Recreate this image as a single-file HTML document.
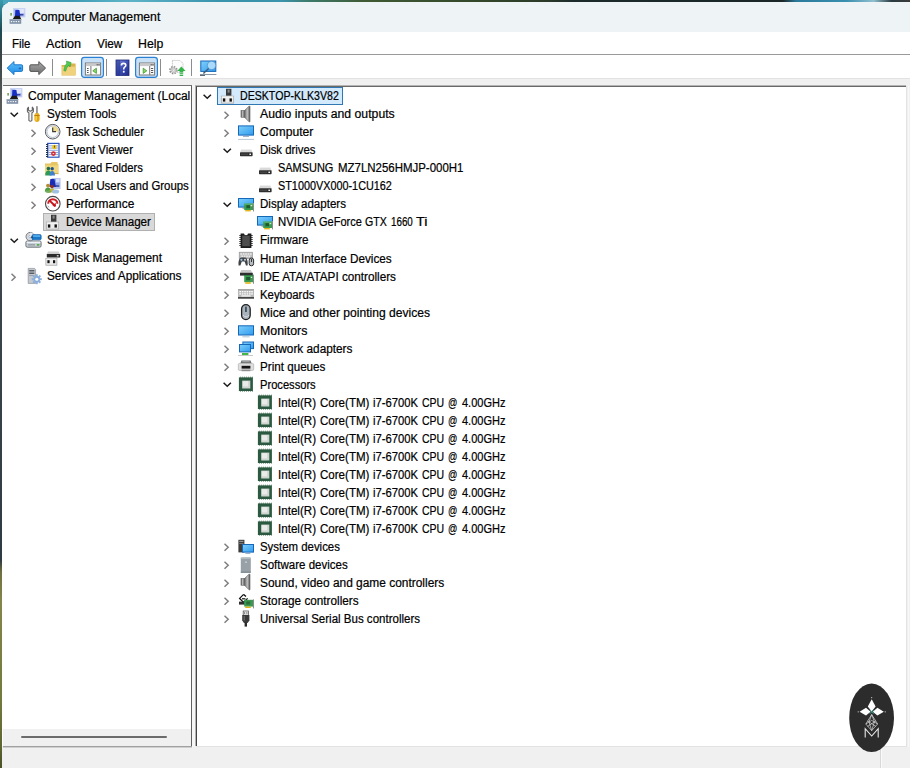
<!DOCTYPE html>
<html><head><meta charset="utf-8"><title>Computer Management</title>
<style>
html,body{margin:0;padding:0;overflow:hidden}
body{width:910px;height:768px;overflow:hidden;position:relative;background:#3795aa;font-family:"Liberation Sans",sans-serif;font-size:12px;color:#000}
.abs{position:absolute}
.t{position:absolute;white-space:nowrap;line-height:18px;height:18px;font-size:12.5px;-webkit-text-stroke:.22px #000;transform-origin:0 50%;display:block}
.i{position:absolute;overflow:visible}
#wall-top{left:0;top:0;width:910px;height:4px;background:linear-gradient(90deg,#4aa6bc 0,#3d9cb4 8%,#5fb4c8 14%,#3893ac 24%,#3a94ab 31%,#3c7a6a 34%,#3f5a34 40%,#34482a 52%,#2b3a28 60%,#1c2a2c 63%,#1a2628 86%,#2a7a9c 87.5%,#3a8fb0 93%,#8fc0d0 96%,#2a3a40 98%,#3a3a3a 100%)}
#wall-left{left:0;top:0;width:3px;height:768px;background:linear-gradient(180deg,#3a9cb0 0,#2d7a8a 12px,#1d4a54 30px,#3a4446 55px,#555958 100px,#5a5e5c 200px,#3a444b 300px,#2f3b43 560px,#6f7040 572px,#84854a 600px,#747a3e 700px,#5e6630 745px,#4a5226 768px)}
#win{left:2px;top:3px;width:908px;height:765px;background:#fff;border-radius:8px 0 0 0;overflow:hidden}
#title{left:0;top:0;width:908px;height:29px;background:#eef3f6}
#menubar{left:0;top:29px;width:908px;height:22px;background:#fff}
#menuline{left:0;top:51px;width:908px;height:1px;background:#9a9a9a}
#toolbar{left:0;top:52px;width:908px;height:23px;background:#fff}
#band{left:0;top:75px;width:908px;height:11px;background:#f0f0f0;border-top:1px solid #e2e2e2;box-sizing:border-box}
#status{left:0;top:743px;width:908px;height:22px;background:#f0f0f0}
</style></head><body>
<svg width="0" height="0" style="position:absolute"><defs>
<linearGradient id="gmon" x1="0" y1="0" x2="1" y2="1"><stop offset="0" stop-color="#7fd0fb"/><stop offset="1" stop-color="#2f9bee"/></linearGradient>
<linearGradient id="gspk" x1="0" y1="0" x2="1" y2="0"><stop offset="0" stop-color="#606060"/><stop offset=".5" stop-color="#c4c4c4"/><stop offset="1" stop-color="#5a5a5a"/></linearGradient>
</defs></svg>
<div class="abs" id="wall-top"></div><div class="abs" id="wall-left"></div>
<div class="abs" id="win">
<div class="abs" id="title"></div><div class="abs" id="menubar"></div><div class="abs" id="menuline"></div><div class="abs" id="toolbar"></div><div class="abs" id="band"></div><div class="abs" id="status"></div>
</div>

<div class="abs" style="left:3px;top:86px;width:188px;height:660px;background:#fff"></div>
<div class="abs" style="left:191px;top:85px;width:1px;height:661px;background:#606060"></div>
<div class="abs" style="left:3px;top:85px;width:189px;height:1px;background:#707070"></div>
<div class="abs" style="left:3px;top:746px;width:189px;height:1px;background:#a0a0a0"></div><div class="abs" style="left:3px;top:747px;width:189px;height:1px;background:#cfcfcf"></div>
<div class="abs" style="left:192px;top:85px;width:3px;height:662px;background:#f6f6f6"></div>
<div class="abs" style="left:195px;top:85px;width:711px;height:661px;background:#b4b4b4"></div>
<div class="abs" style="left:196px;top:86px;width:710px;height:660px;background:#fff;border-left:1px solid #444;border-top:1px solid #686868;box-sizing:border-box"></div>
<div class="abs" style="left:906px;top:86px;width:1px;height:660px;background:#e3e3e3"></div>
<div class="abs" style="left:907px;top:79px;width:3px;height:689px;background:#f0f0f0"></div>
<div class="abs" style="left:196px;top:746px;width:711px;height:1px;background:#e3e3e3"></div>
<div class="abs" style="left:3px;top:729px;width:188px;height:17px;background:#f0f0f0"></div>
<div class="abs" style="left:21px;top:736px;width:146px;height:2px;background:#6b6b6b;border-radius:1px"></div>
<div class="abs" style="left:880px;top:749px;width:1px;height:19px;background:#d8d8d8"></div><div class="abs" style="left:881px;top:749px;width:1px;height:19px;background:#fafafa"></div>
<div class="abs" style="left:908px;top:86px;width:1px;height:661px;background:#f8f8f8"></div>
<div class="abs" style="left:8px;top:2.3px;width:902px;height:1px;background:#eef3f6"></div>
<svg class="i" style="left:9px;top:7.4px" width="16" height="16" viewBox="0 0 16 16"><rect x="4" y="1" width="12.4" height="9.4" fill="#c9d3f4"/><rect x="5" y="2" width="10.4" height="7.4" fill="#aebcf0"/><rect x="9.4" y="2" width="6" height="4" fill="#dfe5fa"/>
<path d="M6.4 3 L10.4 3 L11.4 9.4 L6 9.4 Z" fill="#1630c4"/><rect x="11" y="7.2" width="3.4" height="1.2" fill="#1d2a8a"/>
<path d="M3.4 12.4 L6 8.8 L10.6 8.8 L12.4 12.4 Z" fill="#1a1a1a"/><rect x="1.4" y="6" width="1.4" height="2.6" fill="#5d9a3a"/>
<rect x=".6" y="12.2" width="11.6" height="4.6" fill="#7e8fa6"/><rect x=".6" y="12.2" width="11.6" height="1" fill="#9fb0c4"/>
<g fill="#eef2f7"><rect x="1.8" y="14" width="1.4" height="1.2"/><rect x="4.2" y="14" width="1.4" height="1.2"/><rect x="6.6" y="14" width="1.4" height="1.2"/><rect x="9" y="14" width="1.4" height="1.2"/></g></svg>
<span class="t" style="left:32px;top:8px;transform:scaleX(0.9769)">Computer Management</span>
<span class="t" style="left:12px;top:35px;transform:scaleX(0.9178)">File</span>
<span class="t" style="left:46px;top:35px;transform:scaleX(1.0072)">Action</span>
<span class="t" style="left:97px;top:35px;transform:scaleX(0.9414)">View</span>
<span class="t" style="left:138px;top:35px;transform:scaleX(0.9837)">Help</span>
<svg class="i" style="left:0;top:56px" width="230" height="24" viewBox="0 56 230 24">
<defs>
<linearGradient id="gback" x1="0" y1="0" x2="0" y2="1"><stop offset="0" stop-color="#5cc0fa"/><stop offset="1" stop-color="#1e8ae6"/></linearGradient>
<linearGradient id="gfwd" x1="0" y1="0" x2="0" y2="1"><stop offset="0" stop-color="#a8a8a8"/><stop offset="1" stop-color="#6e6e6e"/></linearGradient>
<linearGradient id="ghelp" x1="0" y1="0" x2="1" y2="1"><stop offset="0" stop-color="#8492dc"/><stop offset=".5" stop-color="#3d4fb4"/><stop offset="1" stop-color="#1d2a86"/></linearGradient>
<linearGradient id="gmon2" x1="0" y1="0" x2="1" y2="1"><stop offset="0" stop-color="#7fd0fb"/><stop offset="1" stop-color="#2f9bee"/></linearGradient>
</defs>
<!-- back arrow -->
<path d="M7.2 68.1 L14 61.6 L14 64.8 L21.4 64.8 Q22.6 64.8 22.6 66 L22.6 70.2 Q22.6 71.4 21.4 71.4 L14 71.4 L14 74.6 Z" fill="url(#gback)" stroke="#1c78cc" stroke-width="1" stroke-linejoin="round"/><rect x="18.6" y="67.6" width="2.6" height="1.6" rx=".8" fill="#1a4fa0" opacity=".7"/>
<!-- forward arrow -->
<path d="M45.6 68.1 L38.8 61.6 L38.8 64.8 L31 64.8 Q29.8 64.8 29.8 66 L29.8 70.2 Q29.8 71.4 31 71.4 L38.8 71.4 L38.8 74.6 Z" fill="url(#gfwd)" stroke="#555" stroke-width="1" stroke-linejoin="round"/>
<!-- separators -->
<rect x="52" y="59" width="1" height="17" fill="#8c8c8c"/>
<rect x="106" y="59" width="1" height="17" fill="#8c8c8c"/>
<rect x="160" y="59" width="1" height="17" fill="#8c8c8c"/>
<rect x="191" y="59" width="1" height="17" fill="#8c8c8c"/>
<!-- folder up -->
<path d="M61.6 65 L67 65 L68 63.6 L75.6 63.6 L75.6 75.4 L61.6 75.4 Z" fill="#d9b24c"/>
<rect x="62.2" y="66.6" width="13.4" height="8.4" fill="#f1d27c"/>
<path d="M71.2 62.6 L66.4 61 L66.8 63.2 Q64.2 65.6 63.8 70.6 L65.6 71.2 Q66.6 67.2 68.8 65.2 L70 67 Z" fill="#4dcb4f" stroke="#2f8f38" stroke-width=".5"/>
<!-- highlighted button 1 -->
<rect x="81.6" y="57.4" width="21.8" height="19.9" rx="2.8" fill="#c9e1f7" stroke="#2a80d2" stroke-width="1.2"/>
<rect x="85.4" y="63" width="15.2" height="12" fill="#fdfdfd" stroke="#787878" stroke-width="1"/>
<rect x="85.9" y="63.5" width="14.2" height="2.6" fill="#c9c9c9"/><rect x="96.6" y="64" width="1.2" height="1.4" fill="#666"/><rect x="98.4" y="64" width="1.2" height="1.4" fill="#666"/>
<rect x="90.4" y="66" width="1" height="9" fill="#787878"/>
<rect x="87" y="68" width="1.6" height="1" fill="#555"/><rect x="87" y="70" width="1.6" height="1" fill="#555"/><rect x="87" y="72" width="1.6" height="1" fill="#555"/>
<path d="M96.4 68.2 L92.8 70.8 L96.4 73.4 Z" fill="#8fd66a" stroke="#3d9a2e" stroke-width=".8"/>
<!-- help -->
<rect x="116" y="60" width="13" height="15.4" fill="url(#ghelp)"/><rect x="116" y="60" width="13" height="15.4" fill="none" stroke="#1a2578" stroke-width=".8"/>
<rect x="116" y="60" width="4.2" height="15.4" fill="#1f2f8c" opacity=".55"/><path d="M121.4 65.4 Q121.4 63.4 123.6 63.4 Q125.8 63.4 125.8 65.2 Q125.8 66.4 124.6 67.2 Q123.7 67.9 123.7 69.4" fill="none" stroke="#fff" stroke-width="1.6"/><rect x="122.9" y="70.8" width="1.7" height="1.8" fill="#fff"/>
<!-- highlighted button 2 -->
<rect x="135.6" y="57.4" width="21.8" height="19.9" rx="2.8" fill="#c9e1f7" stroke="#2a80d2" stroke-width="1.2"/>
<rect x="139.4" y="63" width="15.2" height="12" fill="#fdfdfd" stroke="#787878" stroke-width="1"/>
<rect x="139.9" y="63.5" width="14.2" height="2.6" fill="#c9c9c9"/><rect x="150.6" y="64" width="1.2" height="1.4" fill="#666"/><rect x="152.4" y="64" width="1.2" height="1.4" fill="#666"/>
<rect x="149.2" y="66" width="1" height="9" fill="#787878"/>
<rect x="151" y="68" width="2.2" height="1" fill="#555"/><rect x="151" y="70" width="2.2" height="1" fill="#555"/><rect x="151" y="72" width="2.2" height="1" fill="#555"/>
<path d="M143.2 68.2 L146.8 70.8 L143.2 73.4 Z" fill="#8fd66a" stroke="#3d9a2e" stroke-width=".8"/>
<!-- properties/export: doc + gear + green arrow -->
<path d="M172.4 60.4 L180 60.4 L183 63.4 L183 72.4 L172.4 72.4 Z" fill="#fcfcfc" stroke="#b0b0b0" stroke-width=".8" stroke-dasharray="1.2 .8"/>
<g transform="translate(173.4 70.2)"><circle r="3.5" fill="#f2f2f2" stroke="#8e8e8e" stroke-width="1.5" stroke-dasharray="1.5 1.25"/><circle r="2.4" fill="#e9e9e9" stroke="#a0a0a0" stroke-width=".7"/><circle r="1" fill="#fff" stroke="#9a9a9a" stroke-width=".5"/></g>
<path d="M181.4 66.4 L185.6 71 L183.2 71 L183.2 72.4 L179.6 72.4 L179.6 71 L177.2 71 Z" fill="#36b44a"/><rect x="179.6" y="73.2" width="3.6" height="1.2" fill="#36b44a"/><rect x="179.6" y="75" width="3.6" height="1" fill="#36b44a"/>
<!-- monitor with magnifier -->
<rect x="200.8" y="61" width="15" height="10.4" fill="url(#gmon2)" stroke="#1667b7" stroke-width="1"/>
<circle cx="211.6" cy="65.4" r="4.2" fill="#a9dafa" stroke="#4f8cc6" stroke-width=".7"/>
<path d="M208.6 68.6 L203.4 73.6" stroke="#3c5a78" stroke-width="1.4"/>
<rect x="200" y="74" width="16.4" height="1" fill="#8796a6"/><rect x="200" y="75" width="5" height="1" fill="#5a6a7a"/>
</svg>

<div class="abs" style="left:43px;top:213px;width:112px;height:17.5px;background:#d9d9d9;border:1px solid #b0b0b0;box-sizing:border-box"></div>
<svg class="i" style="left:6px;top:87px" width="16" height="16" viewBox="0 0 16 16"><rect x="4" y="1" width="12.4" height="9.4" fill="#c9d3f4"/><rect x="5" y="2" width="10.4" height="7.4" fill="#aebcf0"/><rect x="9.4" y="2" width="6" height="4" fill="#dfe5fa"/>
<path d="M6.4 3 L10.4 3 L11.4 9.4 L6 9.4 Z" fill="#1630c4"/><rect x="11" y="7.2" width="3.4" height="1.2" fill="#1d2a8a"/>
<path d="M3.4 12.4 L6 8.8 L10.6 8.8 L12.4 12.4 Z" fill="#1a1a1a"/><rect x="1.4" y="6" width="1.4" height="2.6" fill="#5d9a3a"/>
<rect x=".6" y="12.2" width="11.6" height="4.6" fill="#7e8fa6"/><rect x=".6" y="12.2" width="11.6" height="1" fill="#9fb0c4"/>
<g fill="#eef2f7"><rect x="1.8" y="14" width="1.4" height="1.2"/><rect x="4.2" y="14" width="1.4" height="1.2"/><rect x="6.6" y="14" width="1.4" height="1.2"/><rect x="9" y="14" width="1.4" height="1.2"/></g></svg>
<span class="t" style="left:28px;top:87px;transform:scaleX(0.9612)">Computer Management (Local</span>
<svg class="i" style="left:9.5px;top:111px" width="9" height="7" viewBox="0 0 9 7"><path d="M.6 1.7 L4.25 5.3 L7.9 1.7" fill="none" stroke="#1b1b1b" stroke-width="1.5"/></svg>
<svg class="i" style="left:25px;top:105px" width="16" height="16" viewBox="0 0 16 16"><path d="M3.5 2.2 L2.4 3.6 L2.4 6.6 L3.9 8 L3.9 15.4 Q5.4 17 6.9 15.4 L6.9 8 L8.4 6.6 L8.4 3.6 L7.3 2.2 L7.3 5.2 L5.4 6.2 L3.5 5.2 Z" fill="#f4f4f4" stroke="#666" stroke-width="1.1" stroke-linejoin="round"/>
<rect x="11.2" y="1.2" width="1.5" height="7.4" fill="#7d7d7d"/><rect x="9.4" y="8" width="5.2" height="9" rx="2.4" fill="#e6a80f"/><rect x="10.5" y="9.2" width="1.3" height="6.4" rx=".6" fill="#f9d661"/><rect x="9.4" y="10" width="5.2" height="1" fill="#b97d08"/></svg>
<span class="t" style="left:46.6px;top:105px;transform:scaleX(0.9365)">System Tools</span>
<svg class="i" style="left:30px;top:128px" width="7" height="10" viewBox="0 0 7 10"><path d="M1.5 1.7 L5.2 5.2 L1.5 8.7" fill="none" stroke="#7d7d7d" stroke-width="1.45"/></svg>
<svg class="i" style="left:44px;top:123px" width="16" height="16" viewBox="0 0 16 16"><circle cx="8.7" cy="8.7" r="7.3" fill="#e9eef5" stroke="#5a5a5a" stroke-width="1"/><circle cx="8.7" cy="8.7" r="5.8" fill="#fbfcfe" stroke="#b9c0ca" stroke-width="1"/>
<path d="M8.7 8.7 L8.7 2.9 A5.8 5.8 0 0 1 14.5 8.7 Z" fill="#f1dc8c"/><path d="M8.7 4.4 L8.7 8.7 L12 8.7" fill="none" stroke="#3c3c3c" stroke-width="1.2"/></svg>
<span class="t" style="left:66px;top:123px;transform:scaleX(0.9126)">Task Scheduler</span>
<svg class="i" style="left:30px;top:146px" width="7" height="10" viewBox="0 0 7 10"><path d="M1.5 1.7 L5.2 5.2 L1.5 8.7" fill="none" stroke="#7d7d7d" stroke-width="1.45"/></svg>
<svg class="i" style="left:44px;top:141px" width="16" height="16" viewBox="0 0 16 16"><rect x="3" y="1.8" width="12.6" height="15" fill="#2f57bd"/><rect x="4.4" y="3" width="10" height="12.6" fill="#fff"/>
<g fill="#7f98d8"><rect x="4.4" y="4.4" width="10" height=".9"/><rect x="4.4" y="6.6" width="10" height=".9"/><rect x="4.4" y="8.8" width="10" height=".9"/><rect x="4.4" y="11" width="10" height=".9"/><rect x="4.4" y="13.2" width="10" height=".9"/></g>
<g fill="#22304f"><rect x="2" y="3" width="2" height="1"/><rect x="2" y="5" width="2" height="1"/><rect x="2" y="7" width="2" height="1"/><rect x="2" y="9" width="2" height="1"/><rect x="2" y="11" width="2" height="1"/><rect x="2" y="13" width="2" height="1"/><rect x="2" y="15" width="2" height="1"/></g>
<circle cx="10.4" cy="6" r="2.3" fill="#e9c31c"/><rect x="10" y="4.6" width=".9" height="2" fill="#5c4a00"/><circle cx="9.4" cy="12.6" r="2.3" fill="#d9272e"/><rect x="8.6" y="12.2" width="1.6" height=".9" fill="#fff"/></svg>
<span class="t" style="left:66px;top:141px;transform:scaleX(0.9125)">Event Viewer</span>
<svg class="i" style="left:30px;top:164px" width="7" height="10" viewBox="0 0 7 10"><path d="M1.5 1.7 L5.2 5.2 L1.5 8.7" fill="none" stroke="#7d7d7d" stroke-width="1.45"/></svg>
<svg class="i" style="left:44px;top:159px" width="16" height="16" viewBox="0 0 16 16"><path d="M1 4.4 L6.4 4.4 L7.6 3 L13.6 3 L13.6 5 L14.4 5 L14.4 15 L1 15 Z" fill="#e6c662"/><path d="M1 6.4 L14.4 6.4 L14.4 15 L1 15 Z" fill="#f0d77f"/><rect x="1" y="14.2" width="13.4" height=".9" fill="#c9a53c"/>
<circle cx="4.4" cy="9.6" r="1.8" fill="#1f6e4f"/><path d="M1.2 16.6 Q1.4 11.6 4.4 11.6 Q7.4 11.6 7.6 16.6 Z" fill="#2f9a56"/>
<circle cx="8.2" cy="9.8" r="1.7" fill="#1f4f8e"/><path d="M5.6 16.6 Q5.8 12 8.2 12 Q10.8 12 11 16.6 Z" fill="#3f7fd0"/></svg>
<span class="t" style="left:66px;top:159px;transform:scaleX(0.8986)">Shared Folders</span>
<svg class="i" style="left:30px;top:182px" width="7" height="10" viewBox="0 0 7 10"><path d="M1.5 1.7 L5.2 5.2 L1.5 8.7" fill="none" stroke="#7d7d7d" stroke-width="1.45"/></svg>
<svg class="i" style="left:44px;top:177px" width="16" height="16" viewBox="0 0 16 16"><rect x="7.6" y="1" width="9" height="11" fill="#b9c7ee"/><rect x="8.6" y="2" width="7" height="8" fill="#8fa6e6"/><rect x="12" y="2" width="3.6" height="3.4" fill="#d5defa"/>
<path d="M6.4 2 L10.4 2 L12 10 L5.4 10 Z" fill="#1a2cb4"/><rect x="11.6" y="8.4" width="3.6" height="1.2" fill="#1d2a8a"/>
<circle cx="4" cy="8.6" r="1.9" fill="#b98a2e"/><path d="M.8 14.6 Q1 10.6 4 10.6 Q7 10.6 7.2 14.6 Z" fill="#4f9a3e"/>
<circle cx="8" cy="9.6" r="1.8" fill="#8c2f24"/><path d="M5 15.4 Q5.2 11.6 8 11.6 Q10.8 11.6 11 15.4 Z" fill="#c7b43a"/>
<ellipse cx="11.6" cy="14.6" rx="3.6" ry="2" fill="#9fc2e2"/><ellipse cx="4.2" cy="14.6" rx="3" ry="1.4" fill="#6fae5c"/></svg>
<span class="t" style="left:66px;top:177px;transform:scaleX(0.9110)">Local Users and Groups</span>
<svg class="i" style="left:30px;top:200px" width="7" height="10" viewBox="0 0 7 10"><path d="M1.5 1.7 L5.2 5.2 L1.5 8.7" fill="none" stroke="#7d7d7d" stroke-width="1.45"/></svg>
<svg class="i" style="left:44px;top:195px" width="16" height="16" viewBox="0 0 16 16"><circle cx="8.8" cy="8.7" r="7.3" fill="#fff" stroke="#4a4a4a" stroke-width="1.1"/>
<path d="M4.2 8.8 A4.6 4.6 0 0 1 13.4 8.8" fill="none" stroke="#d11f26" stroke-width="2"/><path d="M5.4 5.4 L11.4 11.2" stroke="#c4161c" stroke-width="2"/><path d="M11.6 7.6 L12 11.6 L8.4 11" fill="#c4161c"/>
<path d="M3.8 10.6 L5 12.4" stroke="#999" stroke-width=".8"/></svg>
<span class="t" style="left:66px;top:195px;transform:scaleX(0.9544)">Performance</span>
<svg class="i" style="left:45.6px;top:213px" width="16" height="16" viewBox="0 0 16 16"><rect x="5" y="1.8" width="5.4" height="7" fill="#3a3a3a"/><rect x="6.6" y="2.6" width="2" height="3" fill="#8a8a8a"/>
<rect x=".3" y="9.1" width="12.4" height="7" fill="#ececec" stroke="#a2a2a2" stroke-width=".7"/><rect x=".7" y="9.5" width="11.6" height="1" fill="#fafafa"/>
<rect x="1.9" y="11.4" width="2.4" height="3.2" fill="#111"/><rect x="8.5" y="11.4" width="2.4" height="3.2" fill="#111"/></svg>
<span class="t" style="left:66px;top:213px;transform:scaleX(0.9339)">Device Manager</span>
<svg class="i" style="left:9.5px;top:237px" width="9" height="7" viewBox="0 0 9 7"><path d="M.6 1.7 L4.25 5.3 L7.9 1.7" fill="none" stroke="#1b1b1b" stroke-width="1.5"/></svg>
<svg class="i" style="left:25px;top:231px" width="16" height="16" viewBox="0 0 16 16"><rect x=".9" y="10" width="15.2" height="6.2" rx="1.4" fill="#c9d0d7" stroke="#5f666d" stroke-width=".9"/><rect x="1.8" y="10.6" width="13.4" height="1.4" fill="#eef1f4"/><rect x="3" y="13" width="7" height="1.6" fill="#9aa3ab"/><rect x="11.8" y="13" width="2.6" height="1.8" fill="#58b04a"/>
<circle cx="5.2" cy="5.6" r="4.2" fill="#d5d9de" stroke="#6a7077" stroke-width=".9"/><circle cx="5.2" cy="5.6" r="1.3" fill="#f6f7f9" stroke="#8a9097" stroke-width=".5"/><path d="M5.2 1.6 A4 4 0 0 1 9 4.4 L5.2 5.6 Z" fill="#f2f4f6" opacity=".8"/>
<rect x="7" y="3.6" width="9.2" height="5.2" rx="1.2" fill="#1878cc" stroke="#1459a0" stroke-width=".6"/><rect x="8" y="4.4" width="7.2" height="1.3" fill="#6cc0f7"/><rect x="5.8" y="5.6" width="2.4" height="1.3" fill="#1c4f86"/></svg>
<span class="t" style="left:46.6px;top:231px;transform:scaleX(0.9182)">Storage</span>
<svg class="i" style="left:45px;top:249px" width="16" height="16" viewBox="0 0 16 16"><path d="M3 2.6 L13.6 2.6 L15 5.2 L1.8 5.2 Z" fill="#cfcfcf"/><rect x="1.8" y="5" width="13.4" height="3.6" rx=".6" fill="#2b2b2b"/><rect x="11.8" y="6.2" width="1.8" height="1.2" fill="#f0f0f0"/>
<rect x=".9" y="9.3" width="11" height="6.9" fill="#ececec" stroke="#9c9c9c" stroke-width=".7"/><rect x="1.3" y="9.7" width="10.2" height="1" fill="#fafafa"/>
<rect x="2.4" y="11.2" width="2.2" height="3" fill="#111"/><rect x="8" y="11.2" width="2.2" height="3" fill="#111"/></svg>
<span class="t" style="left:66px;top:249px;transform:scaleX(0.9529)">Disk Management</span>
<svg class="i" style="left:10px;top:272px" width="7" height="10" viewBox="0 0 7 10"><path d="M1.5 1.7 L5.2 5.2 L1.5 8.7" fill="none" stroke="#7d7d7d" stroke-width="1.45"/></svg>
<svg class="i" style="left:25px;top:267px" width="16" height="16" viewBox="0 0 16 16"><path d="M3.2 1.4 L9.6 1.4 L10.6 2.6 L10.6 16.4 L3.2 16.4 Z" fill="#c4c9cf" stroke="#8a9199" stroke-width=".7"/><rect x="4.2" y="3.2" width="5.2" height="1.2" fill="#41464c"/><rect x="4.2" y="5.6" width="5.2" height="1.2" fill="#41464c"/><rect x="4.2" y="8" width="5.2" height="1" fill="#9aa2aa"/>
<g transform="translate(11.8 12.2)"><circle r="3.3" fill="#8cafdc"/><g fill="#8cafdc"><rect x="-1" y="-5" width="2" height="10"/><rect x="-5" y="-1" width="10" height="2"/><rect x="-1" y="-5" width="2" height="10" transform="rotate(45)"/><rect x="-5" y="-1" width="10" height="2" transform="rotate(45)"/></g><circle r="1.5" fill="#fff"/></g></svg>
<span class="t" style="left:46.6px;top:267px;transform:scaleX(0.9435)">Services and Applications</span>
<div class="abs" style="left:217px;top:87px;width:126px;height:18px;box-sizing:border-box;background:#d2eafc;border:1px solid #2f78b4"></div>
<svg class="i" style="left:203px;top:93px" width="9" height="7" viewBox="0 0 9 7"><path d="M.6 1.7 L4.25 5.3 L7.9 1.7" fill="none" stroke="#1b1b1b" stroke-width="1.5"/></svg>
<svg class="i" style="left:221px;top:87px" width="16" height="16" viewBox="0 0 16 16"><rect x="5" y="1.8" width="5.4" height="7" fill="#3a3a3a"/><rect x="6.6" y="2.6" width="2" height="3" fill="#8a8a8a"/>
<rect x=".3" y="9.1" width="12.4" height="7" fill="#ececec" stroke="#a2a2a2" stroke-width=".7"/><rect x=".7" y="9.5" width="11.6" height="1" fill="#fafafa"/>
<rect x="1.9" y="11.4" width="2.4" height="3.2" fill="#111"/><rect x="8.5" y="11.4" width="2.4" height="3.2" fill="#111"/></svg>
<span class="t" style="left:240px;top:87px;transform:scaleX(0.8481)">DESKTOP-KLK3V82</span>
<svg class="i" style="left:223px;top:110px" width="7" height="10" viewBox="0 0 7 10"><path d="M1.5 1.7 L5.2 5.2 L1.5 8.7" fill="none" stroke="#7d7d7d" stroke-width="1.45"/></svg>
<svg class="i" style="left:238px;top:105px" width="16" height="16" viewBox="0 0 16 16"><path d="M6.5 5.6 L11 1.2 L12 1.2 L12 16.8 L11 16.8 L6.5 12.2 Z" fill="url(#gspk)" stroke="#5c5c5c" stroke-width=".6"/>
<rect x="3" y="5.6" width="3.4" height="6.6" fill="#7f7f7f" stroke="#565656" stroke-width=".6"/><rect x="4.2" y="5.8" width="1" height="6.2" fill="#c4c4c4"/></svg>
<span class="t" style="left:259.6px;top:105px;transform:scaleX(0.9789)">Audio inputs and outputs</span>
<svg class="i" style="left:223px;top:128px" width="7" height="10" viewBox="0 0 7 10"><path d="M1.5 1.7 L5.2 5.2 L1.5 8.7" fill="none" stroke="#7d7d7d" stroke-width="1.45"/></svg>
<svg class="i" style="left:238px;top:123px" width="16" height="16" viewBox="0 0 16 16"><rect x=".5" y="2.9" width="15" height="9.2" fill="url(#gmon)" stroke="#1667b7" stroke-width="1"/>
<rect x="5" y="13" width="6" height="1" fill="#9fb4c8"/><rect x="0" y="15.9" width="16" height="1" fill="#b9c7d6"/></svg>
<span class="t" style="left:259.6px;top:123px;transform:scaleX(0.9728)">Computer</span>
<svg class="i" style="left:223px;top:147px" width="9" height="7" viewBox="0 0 9 7"><path d="M.6 1.7 L4.25 5.3 L7.9 1.7" fill="none" stroke="#1b1b1b" stroke-width="1.5"/></svg>
<svg class="i" style="left:238px;top:141px" width="16" height="16" viewBox="0 0 16 16"><path d="M3.4 8 L13 8 L14.6 11.4 L2 11.4 Z" fill="#d9d9d9"/><path d="M3.4 8 L13 8 L13.5 9 L3 9 Z" fill="#efefef"/>
<rect x="2" y="11.2" width="12.6" height="4" rx=".6" fill="#2d2d2d"/><rect x="11.4" y="12.6" width="1.6" height="1.4" fill="#f4f4f4"/><rect x="3" y="12.8" width="7" height=".8" fill="#555"/></svg>
<span class="t" style="left:259.6px;top:141px;transform:scaleX(0.9063)">Disk drives</span>
<svg class="i" style="left:257px;top:159px" width="16" height="16" viewBox="0 0 16 16"><path d="M3.4 8 L13 8 L14.6 11.4 L2 11.4 Z" fill="#d9d9d9"/><path d="M3.4 8 L13 8 L13.5 9 L3 9 Z" fill="#efefef"/>
<rect x="2" y="11.2" width="12.6" height="4" rx=".6" fill="#2d2d2d"/><rect x="11.4" y="12.6" width="1.6" height="1.4" fill="#f4f4f4"/><rect x="3" y="12.8" width="7" height=".8" fill="#555"/></svg>
<span class="t" style="left:278.4px;top:159px;transform:scaleX(0.8765)">SAMSUNG</span><span class="t" style="left:337.6px;top:159px;transform:scaleX(0.9163)">MZ7LN256HMJP-000H1</span>
<svg class="i" style="left:257px;top:177px" width="16" height="16" viewBox="0 0 16 16"><path d="M3.4 8 L13 8 L14.6 11.4 L2 11.4 Z" fill="#d9d9d9"/><path d="M3.4 8 L13 8 L13.5 9 L3 9 Z" fill="#efefef"/>
<rect x="2" y="11.2" width="12.6" height="4" rx=".6" fill="#2d2d2d"/><rect x="11.4" y="12.6" width="1.6" height="1.4" fill="#f4f4f4"/><rect x="3" y="12.8" width="7" height=".8" fill="#555"/></svg>
<span class="t" style="left:278.4px;top:177px;transform:scaleX(0.8672)">ST1000VX000-1CU162</span>
<svg class="i" style="left:223px;top:201px" width="9" height="7" viewBox="0 0 9 7"><path d="M.6 1.7 L4.25 5.3 L7.9 1.7" fill="none" stroke="#1b1b1b" stroke-width="1.5"/></svg>
<svg class="i" style="left:238px;top:195px" width="16" height="16" viewBox="0 0 16 16"><rect x=".5" y="3.5" width="15" height="8.6" fill="url(#gmon)" stroke="#1667b7" stroke-width="1"/>
<rect x="4.4" y="12.6" width="3" height="1" fill="#7d8a96"/>
<rect x="6.2" y="8.6" width="9" height="6.4" fill="#3a9a50"/><rect x="6.2" y="8.6" width="9" height="1" fill="#5fb66f"/><rect x="8.4" y="10.2" width="3.6" height="3" fill="#1f5a2e"/><rect x="12.6" y="10" width="1.6" height="1.2" fill="#d6e9d8"/>
<rect x="15" y="8" width="1" height="8.4" fill="#8c8c8c"/><rect x="7.2" y="15" width="5.6" height="1.4" fill="#e7b416"/></svg>
<span class="t" style="left:259.6px;top:195px;transform:scaleX(0.9226)">Display adapters</span>
<svg class="i" style="left:257px;top:213px" width="16" height="16" viewBox="0 0 16 16"><rect x=".5" y="3.5" width="15" height="8.6" fill="url(#gmon)" stroke="#1667b7" stroke-width="1"/>
<rect x="4.4" y="12.6" width="3" height="1" fill="#7d8a96"/>
<rect x="6.2" y="8.6" width="9" height="6.4" fill="#3a9a50"/><rect x="6.2" y="8.6" width="9" height="1" fill="#5fb66f"/><rect x="8.4" y="10.2" width="3.6" height="3" fill="#1f5a2e"/><rect x="12.6" y="10" width="1.6" height="1.2" fill="#d6e9d8"/>
<rect x="15" y="8" width="1" height="8.4" fill="#8c8c8c"/><rect x="7.2" y="15" width="5.6" height="1.4" fill="#e7b416"/></svg>
<span class="t" style="left:278.4px;top:213px;transform:scaleX(0.9115)">NVIDIA</span><span class="t" style="left:319.4px;top:213px;transform:scaleX(0.8799)">GeForce</span><span class="t" style="left:365.4px;top:213px;transform:scaleX(0.8481)">GTX</span><span class="t" style="left:391px;top:213px;transform:scaleX(0.7838)">1660</span><span class="t" style="left:415.8px;top:213px;transform:scaleX(1.1554)">Ti</span>
<svg class="i" style="left:223px;top:236px" width="7" height="10" viewBox="0 0 7 10"><path d="M1.5 1.7 L5.2 5.2 L1.5 8.7" fill="none" stroke="#7d7d7d" stroke-width="1.45"/></svg>
<svg class="i" style="left:238px;top:231px" width="16" height="16" viewBox="0 0 16 16"><path d="M2.6 2.4 L6 2.4 A2 1.8 0 0 0 10 2.4 L13.4 2.4 L13.4 17 L2.6 17 Z" fill="#1c1c1c"/>
<rect x="4.2" y="4.6" width="7.6" height="10.6" fill="#4d4d4d"/>
<g fill="#1c1c1c"><rect x="1.4" y="4" width="1.4" height="1"/><rect x="1.4" y="6" width="1.4" height="1"/><rect x="1.4" y="8" width="1.4" height="1"/><rect x="1.4" y="10" width="1.4" height="1"/><rect x="1.4" y="12" width="1.4" height="1"/><rect x="1.4" y="14" width="1.4" height="1"/>
<rect x="13.2" y="4" width="1.4" height="1"/><rect x="13.2" y="6" width="1.4" height="1"/><rect x="13.2" y="8" width="1.4" height="1"/><rect x="13.2" y="10" width="1.4" height="1"/><rect x="13.2" y="12" width="1.4" height="1"/><rect x="13.2" y="14" width="1.4" height="1"/></g></svg>
<span class="t" style="left:259.6px;top:231px;transform:scaleX(0.9329)">Firmware</span>
<svg class="i" style="left:223px;top:254px" width="7" height="10" viewBox="0 0 7 10"><path d="M1.5 1.7 L5.2 5.2 L1.5 8.7" fill="none" stroke="#7d7d7d" stroke-width="1.45"/></svg>
<svg class="i" style="left:238px;top:249px" width="16" height="16" viewBox="0 0 16 16"><rect x="1.2" y="3.2" width="13.4" height="6.4" fill="#bdbdbd" stroke="#8e8e8e" stroke-width=".6"/>
<g fill="#f6f6f6"><rect x="2.4" y="4.4" width="1.6" height="1.2"/><rect x="4.8" y="4.4" width="1.6" height="1.2"/><rect x="7.2" y="4.4" width="1.6" height="1.2"/><rect x="9.6" y="4.4" width="1.6" height="1.2"/><rect x="12" y="4.4" width="1.6" height="1.2"/><rect x="3.4" y="6.6" width="1.6" height="1.2"/><rect x="5.8" y="6.6" width="1.6" height="1.2"/><rect x="8.2" y="6.6" width="1.6" height="1.2"/><rect x="10.6" y="6.6" width="1.6" height="1.2"/></g>
<path d="M0.6 16.6 C0 12 1.6 8.6 3.4 8.6 L7 8.6 C8.8 8.6 10.2 12 9.6 16.6 L8 16.6 L6.6 12.6 L3.8 12.6 L2.4 16.6 Z" fill="#3f4347"/>
<circle cx="3.4" cy="10.8" r="1.1" fill="#9cc4e6"/><circle cx="7" cy="10.8" r="1" fill="#c9d5dd"/>
<rect x="11.2" y="9" width="4.4" height="7.8" rx="2.1" fill="#b4bcc4" stroke="#2a2a2a" stroke-width="1"/><rect x="13" y="10" width=".9" height="3" fill="#2a2a2a"/></svg>
<span class="t" style="left:259.6px;top:250px;transform:scaleX(0.9384)">Human Interface Devices</span>
<svg class="i" style="left:223px;top:272px" width="7" height="10" viewBox="0 0 7 10"><path d="M1.5 1.7 L5.2 5.2 L1.5 8.7" fill="none" stroke="#7d7d7d" stroke-width="1.45"/></svg>
<svg class="i" style="left:238px;top:267px" width="16" height="16" viewBox="0 0 16 16"><path d="M3.2 3 L12.8 3 L14.4 6 L2 6 Z" fill="#c9c9c9"/><rect x="2" y="5.8" width="12.8" height="2.8" fill="#2f2f2f"/>
<rect x="6.2" y="8" width="9" height="7.2" fill="#3a9a50"/><rect x="6.2" y="8" width="9" height="1" fill="#2e7d40"/><rect x="8.2" y="10" width="4" height="3.2" fill="#1f5a2e"/><rect x="12.8" y="9.8" width="1.4" height="1.2" fill="#d6e9d8"/>
<rect x="15" y="7.6" width="1" height="9.2" fill="#8c8c8c"/><rect x="7.2" y="15.2" width="5.6" height="1.6" fill="#e7b416"/></svg>
<span class="t" style="left:259.6px;top:268px;transform:scaleX(0.9382)">IDE ATA/ATAPI controllers</span>
<svg class="i" style="left:223px;top:290px" width="7" height="10" viewBox="0 0 7 10"><path d="M1.5 1.7 L5.2 5.2 L1.5 8.7" fill="none" stroke="#7d7d7d" stroke-width="1.45"/></svg>
<svg class="i" style="left:238px;top:285px" width="16" height="16" viewBox="0 0 16 16"><rect x="0" y="4.2" width="16" height="8.2" fill="#b9b9b9"/><rect x="0" y="4.2" width="16" height="1" fill="#9d9d9d"/><rect x="0" y="12.2" width="16" height="1.4" fill="#1e1e1e"/>
<g fill="#fafafa"><rect x="1.4" y="6" width="1.6" height="1.4"/><rect x="3.8" y="6" width="1.6" height="1.4"/><rect x="6.2" y="6" width="1.6" height="1.4"/><rect x="8.6" y="6" width="1.6" height="1.4"/><rect x="11" y="6" width="1.6" height="1.4"/><rect x="13.2" y="6" width="1.6" height="1.4"/>
<rect x="1.4" y="8.2" width="1.6" height="1.4"/><rect x="3.8" y="8.2" width="1.6" height="1.4"/><rect x="6.2" y="8.2" width="1.6" height="1.4"/><rect x="8.6" y="8.2" width="1.6" height="1.4"/><rect x="11" y="8.2" width="1.6" height="1.4"/><rect x="13.2" y="8.2" width="1.6" height="1.4"/>
<rect x="3.4" y="10.3" width="9.2" height="1.2"/></g></svg>
<span class="t" style="left:259.6px;top:286px;transform:scaleX(0.9102)">Keyboards</span>
<svg class="i" style="left:223px;top:308px" width="7" height="10" viewBox="0 0 7 10"><path d="M1.5 1.7 L5.2 5.2 L1.5 8.7" fill="none" stroke="#7d7d7d" stroke-width="1.45"/></svg>
<svg class="i" style="left:238px;top:303px" width="16" height="16" viewBox="0 0 16 16"><rect x="3.6" y="1.6" width="8.6" height="15" rx="4.3" fill="#a9b3bd" stroke="#1f1f1f" stroke-width="1.3"/><rect x="7.3" y="3.6" width="1.3" height="5.4" fill="#1b2a3a"/><path d="M5 12 Q8 16 11 12" fill="none" stroke="#d5dbe0" stroke-width="1"/></svg>
<span class="t" style="left:259.6px;top:304px;transform:scaleX(0.9669)">Mice and other pointing devices</span>
<svg class="i" style="left:223px;top:326px" width="7" height="10" viewBox="0 0 7 10"><path d="M1.5 1.7 L5.2 5.2 L1.5 8.7" fill="none" stroke="#7d7d7d" stroke-width="1.45"/></svg>
<svg class="i" style="left:238px;top:321px" width="16" height="16" viewBox="0 0 16 16"><rect x=".5" y="4.8" width="15" height="9.2" fill="url(#gmon)" stroke="#1667b7" stroke-width="1"/><rect x="4.4" y="15.2" width="7.2" height="1.2" fill="#b9cbdc"/></svg>
<span class="t" style="left:259.6px;top:322px;transform:scaleX(0.9888)">Monitors</span>
<svg class="i" style="left:223px;top:344px" width="7" height="10" viewBox="0 0 7 10"><path d="M1.5 1.7 L5.2 5.2 L1.5 8.7" fill="none" stroke="#7d7d7d" stroke-width="1.45"/></svg>
<svg class="i" style="left:238px;top:339px" width="16" height="16" viewBox="0 0 16 16"><rect x="4.9" y="3" width="10.6" height="6.6" fill="url(#gmon)" stroke="#1667b7" stroke-width="1"/>
<rect x="1.5" y="5.5" width="11" height="7.4" fill="url(#gmon)" stroke="#1667b7" stroke-width="1"/>
<rect x="4" y="14" width="6.4" height="2" fill="#43b649"/><rect x="0" y="16" width="15" height="1" fill="#c8c8c8"/></svg>
<span class="t" style="left:259.6px;top:340px;transform:scaleX(0.9432)">Network adapters</span>
<svg class="i" style="left:223px;top:362px" width="7" height="10" viewBox="0 0 7 10"><path d="M1.5 1.7 L5.2 5.2 L1.5 8.7" fill="none" stroke="#7d7d7d" stroke-width="1.45"/></svg>
<svg class="i" style="left:238px;top:357px" width="16" height="16" viewBox="0 0 16 16"><path d="M3.4 3.4 L12.6 3.4 L13.6 6.6 L2.4 6.6 Z" fill="#6b6f6f"/><rect x="4.4" y="4" width="7.2" height="1.2" fill="#9aa0a0"/>
<rect x=".3" y="6.4" width="15.4" height="7" rx="1.2" fill="#dedede" stroke="#a6a6a6" stroke-width=".6"/><rect x="3.6" y="8.8" width="8.8" height="2.8" fill="#141414"/><rect x="3.6" y="12.6" width="8.8" height="1.6" fill="#8e8e8e"/></svg>
<span class="t" style="left:259.6px;top:358px;transform:scaleX(0.9318)">Print queues</span>
<svg class="i" style="left:223px;top:381px" width="9" height="7" viewBox="0 0 9 7"><path d="M.6 1.7 L4.25 5.3 L7.9 1.7" fill="none" stroke="#1b1b1b" stroke-width="1.5"/></svg>
<svg class="i" style="left:238px;top:375px" width="16" height="16" viewBox="0 0 16 16"><rect x=".9" y="2.4" width="14" height="13.6" fill="#2b5a40"/>
<path d="M.9 2.4 h1 v-.6 h1 v.6 h1 v-.6 h1 v.6 h1 v-.6 h1 v.6 h1 v-.6 h1 v.6 h1 v-.6 h1 v.6 h1 v-.6 h1 v.6 h1 v-.6 h1 v.6 Z" fill="#2b5a40"/>
<path d="M.9 16 h1 v.6 h1 v-.6 h1 v.6 h1 v-.6 h1 v.6 h1 v-.6 h1 v.6 h1 v-.6 h1 v.6 h1 v-.6 h1 v.6 h1 v-.6 h1 v.6 h1 v-.6 Z" fill="#2b5a40"/>
<rect x="4.2" y="5.6" width="8.1" height="7.9" fill="#cfd5d1"/><rect x="4.8" y="6.2" width="5.4" height="5.2" fill="#e9ece9"/></svg>
<span class="t" style="left:259.6px;top:376px;transform:scaleX(0.8908)">Processors</span>
<svg class="i" style="left:257px;top:393px" width="16" height="16" viewBox="0 0 16 16"><rect x=".9" y="2.4" width="14" height="13.6" fill="#2b5a40"/>
<path d="M.9 2.4 h1 v-.6 h1 v.6 h1 v-.6 h1 v.6 h1 v-.6 h1 v.6 h1 v-.6 h1 v.6 h1 v-.6 h1 v.6 h1 v-.6 h1 v.6 h1 v-.6 h1 v.6 Z" fill="#2b5a40"/>
<path d="M.9 16 h1 v.6 h1 v-.6 h1 v.6 h1 v-.6 h1 v.6 h1 v-.6 h1 v.6 h1 v-.6 h1 v.6 h1 v-.6 h1 v.6 h1 v-.6 h1 v.6 h1 v-.6 Z" fill="#2b5a40"/>
<rect x="4.2" y="5.6" width="8.1" height="7.9" fill="#cfd5d1"/><rect x="4.8" y="6.2" width="5.4" height="5.2" fill="#e9ece9"/></svg>
<span class="t" style="left:278.4px;top:394px;transform:scaleX(0.9272)">Intel(R)</span><span class="t" style="left:319.8px;top:394px;transform:scaleX(0.9239)">Core(TM)</span><span class="t" style="left:373.2px;top:394px;transform:scaleX(0.8992)">i7-6700K</span><span class="t" style="left:422.4px;top:394px;transform:scaleX(0.8407)">CPU</span><span class="t" style="left:448.4px;top:394px;transform:scaleX(0.7400)">@</span><span class="t" style="left:461.6px;top:394px;transform:scaleX(0.8795)">4.00GHz</span>
<svg class="i" style="left:257px;top:411px" width="16" height="16" viewBox="0 0 16 16"><rect x=".9" y="2.4" width="14" height="13.6" fill="#2b5a40"/>
<path d="M.9 2.4 h1 v-.6 h1 v.6 h1 v-.6 h1 v.6 h1 v-.6 h1 v.6 h1 v-.6 h1 v.6 h1 v-.6 h1 v.6 h1 v-.6 h1 v.6 h1 v-.6 h1 v.6 Z" fill="#2b5a40"/>
<path d="M.9 16 h1 v.6 h1 v-.6 h1 v.6 h1 v-.6 h1 v.6 h1 v-.6 h1 v.6 h1 v-.6 h1 v.6 h1 v-.6 h1 v.6 h1 v-.6 h1 v.6 h1 v-.6 Z" fill="#2b5a40"/>
<rect x="4.2" y="5.6" width="8.1" height="7.9" fill="#cfd5d1"/><rect x="4.8" y="6.2" width="5.4" height="5.2" fill="#e9ece9"/></svg>
<span class="t" style="left:278.4px;top:412px;transform:scaleX(0.9272)">Intel(R)</span><span class="t" style="left:319.8px;top:412px;transform:scaleX(0.9239)">Core(TM)</span><span class="t" style="left:373.2px;top:412px;transform:scaleX(0.8992)">i7-6700K</span><span class="t" style="left:422.4px;top:412px;transform:scaleX(0.8407)">CPU</span><span class="t" style="left:448.4px;top:412px;transform:scaleX(0.7400)">@</span><span class="t" style="left:461.6px;top:412px;transform:scaleX(0.8795)">4.00GHz</span>
<svg class="i" style="left:257px;top:429px" width="16" height="16" viewBox="0 0 16 16"><rect x=".9" y="2.4" width="14" height="13.6" fill="#2b5a40"/>
<path d="M.9 2.4 h1 v-.6 h1 v.6 h1 v-.6 h1 v.6 h1 v-.6 h1 v.6 h1 v-.6 h1 v.6 h1 v-.6 h1 v.6 h1 v-.6 h1 v.6 h1 v-.6 h1 v.6 Z" fill="#2b5a40"/>
<path d="M.9 16 h1 v.6 h1 v-.6 h1 v.6 h1 v-.6 h1 v.6 h1 v-.6 h1 v.6 h1 v-.6 h1 v.6 h1 v-.6 h1 v.6 h1 v-.6 h1 v.6 h1 v-.6 Z" fill="#2b5a40"/>
<rect x="4.2" y="5.6" width="8.1" height="7.9" fill="#cfd5d1"/><rect x="4.8" y="6.2" width="5.4" height="5.2" fill="#e9ece9"/></svg>
<span class="t" style="left:278.4px;top:430px;transform:scaleX(0.9272)">Intel(R)</span><span class="t" style="left:319.8px;top:430px;transform:scaleX(0.9239)">Core(TM)</span><span class="t" style="left:373.2px;top:430px;transform:scaleX(0.8992)">i7-6700K</span><span class="t" style="left:422.4px;top:430px;transform:scaleX(0.8407)">CPU</span><span class="t" style="left:448.4px;top:430px;transform:scaleX(0.7400)">@</span><span class="t" style="left:461.6px;top:430px;transform:scaleX(0.8795)">4.00GHz</span>
<svg class="i" style="left:257px;top:447px" width="16" height="16" viewBox="0 0 16 16"><rect x=".9" y="2.4" width="14" height="13.6" fill="#2b5a40"/>
<path d="M.9 2.4 h1 v-.6 h1 v.6 h1 v-.6 h1 v.6 h1 v-.6 h1 v.6 h1 v-.6 h1 v.6 h1 v-.6 h1 v.6 h1 v-.6 h1 v.6 h1 v-.6 h1 v.6 Z" fill="#2b5a40"/>
<path d="M.9 16 h1 v.6 h1 v-.6 h1 v.6 h1 v-.6 h1 v.6 h1 v-.6 h1 v.6 h1 v-.6 h1 v.6 h1 v-.6 h1 v.6 h1 v-.6 h1 v.6 h1 v-.6 Z" fill="#2b5a40"/>
<rect x="4.2" y="5.6" width="8.1" height="7.9" fill="#cfd5d1"/><rect x="4.8" y="6.2" width="5.4" height="5.2" fill="#e9ece9"/></svg>
<span class="t" style="left:278.4px;top:448px;transform:scaleX(0.9272)">Intel(R)</span><span class="t" style="left:319.8px;top:448px;transform:scaleX(0.9239)">Core(TM)</span><span class="t" style="left:373.2px;top:448px;transform:scaleX(0.8992)">i7-6700K</span><span class="t" style="left:422.4px;top:448px;transform:scaleX(0.8407)">CPU</span><span class="t" style="left:448.4px;top:448px;transform:scaleX(0.7400)">@</span><span class="t" style="left:461.6px;top:448px;transform:scaleX(0.8795)">4.00GHz</span>
<svg class="i" style="left:257px;top:465px" width="16" height="16" viewBox="0 0 16 16"><rect x=".9" y="2.4" width="14" height="13.6" fill="#2b5a40"/>
<path d="M.9 2.4 h1 v-.6 h1 v.6 h1 v-.6 h1 v.6 h1 v-.6 h1 v.6 h1 v-.6 h1 v.6 h1 v-.6 h1 v.6 h1 v-.6 h1 v.6 h1 v-.6 h1 v.6 Z" fill="#2b5a40"/>
<path d="M.9 16 h1 v.6 h1 v-.6 h1 v.6 h1 v-.6 h1 v.6 h1 v-.6 h1 v.6 h1 v-.6 h1 v.6 h1 v-.6 h1 v.6 h1 v-.6 h1 v.6 h1 v-.6 Z" fill="#2b5a40"/>
<rect x="4.2" y="5.6" width="8.1" height="7.9" fill="#cfd5d1"/><rect x="4.8" y="6.2" width="5.4" height="5.2" fill="#e9ece9"/></svg>
<span class="t" style="left:278.4px;top:466px;transform:scaleX(0.9272)">Intel(R)</span><span class="t" style="left:319.8px;top:466px;transform:scaleX(0.9239)">Core(TM)</span><span class="t" style="left:373.2px;top:466px;transform:scaleX(0.8992)">i7-6700K</span><span class="t" style="left:422.4px;top:466px;transform:scaleX(0.8407)">CPU</span><span class="t" style="left:448.4px;top:466px;transform:scaleX(0.7400)">@</span><span class="t" style="left:461.6px;top:466px;transform:scaleX(0.8795)">4.00GHz</span>
<svg class="i" style="left:257px;top:483px" width="16" height="16" viewBox="0 0 16 16"><rect x=".9" y="2.4" width="14" height="13.6" fill="#2b5a40"/>
<path d="M.9 2.4 h1 v-.6 h1 v.6 h1 v-.6 h1 v.6 h1 v-.6 h1 v.6 h1 v-.6 h1 v.6 h1 v-.6 h1 v.6 h1 v-.6 h1 v.6 h1 v-.6 h1 v.6 Z" fill="#2b5a40"/>
<path d="M.9 16 h1 v.6 h1 v-.6 h1 v.6 h1 v-.6 h1 v.6 h1 v-.6 h1 v.6 h1 v-.6 h1 v.6 h1 v-.6 h1 v.6 h1 v-.6 h1 v.6 h1 v-.6 Z" fill="#2b5a40"/>
<rect x="4.2" y="5.6" width="8.1" height="7.9" fill="#cfd5d1"/><rect x="4.8" y="6.2" width="5.4" height="5.2" fill="#e9ece9"/></svg>
<span class="t" style="left:278.4px;top:484px;transform:scaleX(0.9272)">Intel(R)</span><span class="t" style="left:319.8px;top:484px;transform:scaleX(0.9239)">Core(TM)</span><span class="t" style="left:373.2px;top:484px;transform:scaleX(0.8992)">i7-6700K</span><span class="t" style="left:422.4px;top:484px;transform:scaleX(0.8407)">CPU</span><span class="t" style="left:448.4px;top:484px;transform:scaleX(0.7400)">@</span><span class="t" style="left:461.6px;top:484px;transform:scaleX(0.8795)">4.00GHz</span>
<svg class="i" style="left:257px;top:501px" width="16" height="16" viewBox="0 0 16 16"><rect x=".9" y="2.4" width="14" height="13.6" fill="#2b5a40"/>
<path d="M.9 2.4 h1 v-.6 h1 v.6 h1 v-.6 h1 v.6 h1 v-.6 h1 v.6 h1 v-.6 h1 v.6 h1 v-.6 h1 v.6 h1 v-.6 h1 v.6 h1 v-.6 h1 v.6 Z" fill="#2b5a40"/>
<path d="M.9 16 h1 v.6 h1 v-.6 h1 v.6 h1 v-.6 h1 v.6 h1 v-.6 h1 v.6 h1 v-.6 h1 v.6 h1 v-.6 h1 v.6 h1 v-.6 h1 v.6 h1 v-.6 Z" fill="#2b5a40"/>
<rect x="4.2" y="5.6" width="8.1" height="7.9" fill="#cfd5d1"/><rect x="4.8" y="6.2" width="5.4" height="5.2" fill="#e9ece9"/></svg>
<span class="t" style="left:278.4px;top:502px;transform:scaleX(0.9272)">Intel(R)</span><span class="t" style="left:319.8px;top:502px;transform:scaleX(0.9239)">Core(TM)</span><span class="t" style="left:373.2px;top:502px;transform:scaleX(0.8992)">i7-6700K</span><span class="t" style="left:422.4px;top:502px;transform:scaleX(0.8407)">CPU</span><span class="t" style="left:448.4px;top:502px;transform:scaleX(0.7400)">@</span><span class="t" style="left:461.6px;top:502px;transform:scaleX(0.8795)">4.00GHz</span>
<svg class="i" style="left:257px;top:519px" width="16" height="16" viewBox="0 0 16 16"><rect x=".9" y="2.4" width="14" height="13.6" fill="#2b5a40"/>
<path d="M.9 2.4 h1 v-.6 h1 v.6 h1 v-.6 h1 v.6 h1 v-.6 h1 v.6 h1 v-.6 h1 v.6 h1 v-.6 h1 v.6 h1 v-.6 h1 v.6 h1 v-.6 h1 v.6 Z" fill="#2b5a40"/>
<path d="M.9 16 h1 v.6 h1 v-.6 h1 v.6 h1 v-.6 h1 v.6 h1 v-.6 h1 v.6 h1 v-.6 h1 v.6 h1 v-.6 h1 v.6 h1 v-.6 h1 v.6 h1 v-.6 Z" fill="#2b5a40"/>
<rect x="4.2" y="5.6" width="8.1" height="7.9" fill="#cfd5d1"/><rect x="4.8" y="6.2" width="5.4" height="5.2" fill="#e9ece9"/></svg>
<span class="t" style="left:278.4px;top:520px;transform:scaleX(0.9272)">Intel(R)</span><span class="t" style="left:319.8px;top:520px;transform:scaleX(0.9239)">Core(TM)</span><span class="t" style="left:373.2px;top:520px;transform:scaleX(0.8992)">i7-6700K</span><span class="t" style="left:422.4px;top:520px;transform:scaleX(0.8407)">CPU</span><span class="t" style="left:448.4px;top:520px;transform:scaleX(0.7400)">@</span><span class="t" style="left:461.6px;top:520px;transform:scaleX(0.8795)">4.00GHz</span>
<svg class="i" style="left:223px;top:542px" width="7" height="10" viewBox="0 0 7 10"><path d="M1.5 1.7 L5.2 5.2 L1.5 8.7" fill="none" stroke="#7d7d7d" stroke-width="1.45"/></svg>
<svg class="i" style="left:238px;top:537px" width="16" height="16" viewBox="0 0 16 16"><rect x=".4" y="2.8" width="6" height="12.6" fill="#3b3b3b"/><rect x="1.2" y="3.8" width="4.2" height="1.2" fill="#9a9a9a"/><rect x="1.2" y="6" width="4.2" height="1" fill="#777"/>
<rect x="4.5" y="7.5" width="11" height="7.6" fill="url(#gmon)" stroke="#1667b7" stroke-width="1"/><rect x="7.4" y="16" width="5" height="1" fill="#9fb4c8"/></svg>
<span class="t" style="left:259.6px;top:538px;transform:scaleX(0.9128)">System devices</span>
<svg class="i" style="left:223px;top:560px" width="7" height="10" viewBox="0 0 7 10"><path d="M1.5 1.7 L5.2 5.2 L1.5 8.7" fill="none" stroke="#7d7d7d" stroke-width="1.45"/></svg>
<svg class="i" style="left:238px;top:555px" width="16" height="16" viewBox="0 0 16 16"><path d="M3.6 2.4 L12 2.4 L12.8 3.6 L12.8 17.8 L2.8 17.8 L2.8 3.6 Z" fill="#97a1a7"/><rect x="2.8" y="2.4" width="10" height="1.4" fill="#b7c0c5"/><rect x="7.2" y="6.4" width="1.6" height="1.6" fill="#c6d0d6"/><rect x="2.8" y="16.6" width="10" height="1.2" fill="#7e888e"/></svg>
<span class="t" style="left:259.6px;top:556px;transform:scaleX(0.9213)">Software devices</span>
<svg class="i" style="left:223px;top:578px" width="7" height="10" viewBox="0 0 7 10"><path d="M1.5 1.7 L5.2 5.2 L1.5 8.7" fill="none" stroke="#7d7d7d" stroke-width="1.45"/></svg>
<svg class="i" style="left:238px;top:573px" width="16" height="16" viewBox="0 0 16 16"><path d="M6.5 5.6 L11 1.2 L12 1.2 L12 16.8 L11 16.8 L6.5 12.2 Z" fill="url(#gspk)" stroke="#5c5c5c" stroke-width=".6"/>
<rect x="3" y="5.6" width="3.4" height="6.6" fill="#7f7f7f" stroke="#565656" stroke-width=".6"/><rect x="4.2" y="5.8" width="1" height="6.2" fill="#c4c4c4"/></svg>
<span class="t" style="left:259.6px;top:574px;transform:scaleX(0.9535)">Sound, video and game controllers</span>
<svg class="i" style="left:223px;top:596px" width="7" height="10" viewBox="0 0 7 10"><path d="M1.5 1.7 L5.2 5.2 L1.5 8.7" fill="none" stroke="#7d7d7d" stroke-width="1.45"/></svg>
<svg class="i" style="left:238px;top:591px" width="16" height="16" viewBox="0 0 16 16"><path d="M5.6 3.4 L1.6 7.4 L5.6 11.4 L9.6 7.4" fill="none" stroke="#111" stroke-width="1.3"/><path d="M5.6 3.4 L8 5.6" stroke="#111" stroke-width="1.3"/>
<rect x="1" y="10.6" width="6" height="3" fill="#2f2f2f"/><rect x="4" y="7.2" width="3.4" height="1.2" fill="#111"/>
<rect x="6.2" y="8.8" width="9" height="6.8" fill="#3a9a50"/><rect x="8.2" y="10.4" width="4" height="3.2" fill="#2a6f3a"/>
<rect x="15" y="8.4" width="1" height="9" fill="#8c8c8c"/><rect x="7.2" y="15.6" width="5.6" height="1.4" fill="#e7b416"/></svg>
<span class="t" style="left:259.6px;top:592px;transform:scaleX(0.9397)">Storage controllers</span>
<svg class="i" style="left:223px;top:614px" width="7" height="10" viewBox="0 0 7 10"><path d="M1.5 1.7 L5.2 5.2 L1.5 8.7" fill="none" stroke="#7d7d7d" stroke-width="1.45"/></svg>
<svg class="i" style="left:238px;top:609px" width="16" height="16" viewBox="0 0 16 16"><rect x="5.2" y="2" width="5.2" height="4.2" fill="#f7f7f7" stroke="#555" stroke-width=".8"/><rect x="6.2" y="3.4" width="1" height="1.2" fill="#222"/><rect x="8.4" y="3.4" width="1" height="1.2" fill="#222"/>
<path d="M4.2 6 L11.4 6 L11.4 11.6 L9.6 14 L6 14 L4.2 11.6 Z" fill="#3a3a3a"/><rect x="6.6" y="13.6" width="2.4" height="4" fill="#2a2a2a"/><rect x="5.6" y="7" width="1.2" height="4.6" fill="#6a6a6a"/></svg>
<span class="t" style="left:259.6px;top:610px;transform:scaleX(0.9212)">Universal Serial Bus controllers</span>
<svg class="i" style="left:846px;top:680px" width="52" height="76" viewBox="846 680 52 76">
<ellipse cx="871.6" cy="717.8" rx="22.4" ry="34.2" fill="#2c2c2c"/>
<path d="M871.7 699.2 L875.6 706.6 L871.7 711.4 L867.8 706.6 Z" fill="#fff"/>
<path d="M859.6 711.8 L866 707.8 L870.6 711.8 L866 715.6 Z" fill="#fff"/>
<path d="M883.8 711.8 L877.4 707.8 L872.8 711.8 L877.4 715.6 Z" fill="#fff"/>
<circle cx="871.7" cy="697.6" r=".6" fill="#ddd"/><circle cx="858.2" cy="711.8" r=".6" fill="#ddd"/><circle cx="885.2" cy="711.8" r=".6" fill="#ddd"/>
<path d="M869.8 709.8 L873.6 713.8 M873.6 709.8 L869.8 713.8" stroke="#3f9a86" stroke-width="1"/>
<g fill="none" stroke="#d8d8d8" stroke-width=".7"><path d="M871.7 714.6 L877.6 724 L871.7 730.6 L865.8 724 Z"/><path d="M865.8 724 L871.7 720.4 L877.6 724"/><path d="M871.7 714.6 L869 722 L871.7 730.6 L874.4 722 Z"/><path d="M867.6 721 L875.8 726.4 M875.8 721 L867.6 726.4"/></g>
<path d="M865.2 737.4 L865.2 728.6 L871.7 736 L878.2 728.6 L878.2 737.4" fill="none" stroke="#e8e8e8" stroke-width="1.1"/>
</svg>

</body></html>
